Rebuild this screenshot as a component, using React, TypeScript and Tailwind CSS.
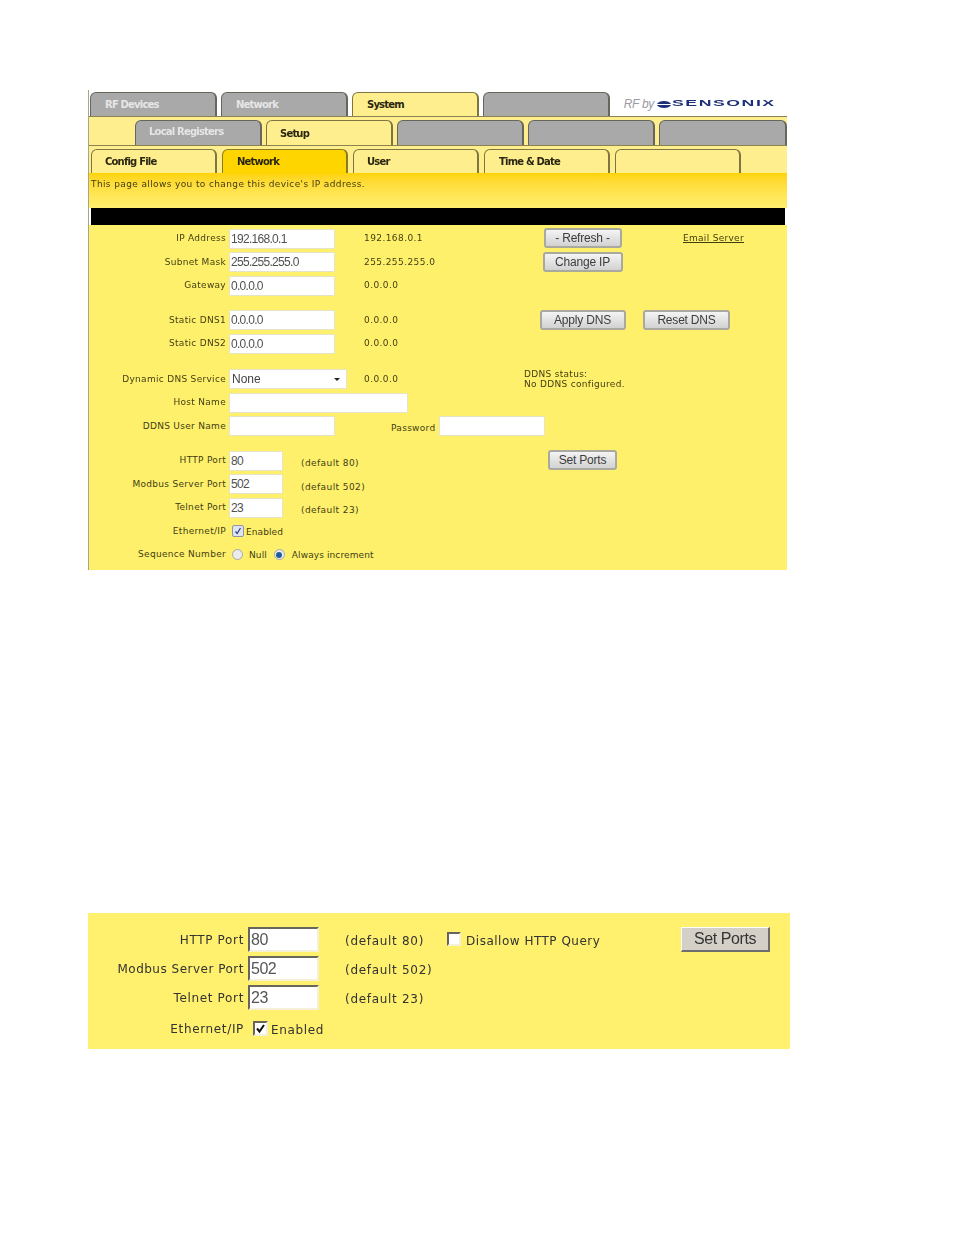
import React from 'react';

const verdana = "font-['DejaVu_Sans',sans-serif]";
const arial = "font-['Liberation_Sans',sans-serif]";
const formRow = 'grid grid-cols-[138px_135px_158px_121px_1fr] items-center h-[23.5px] pl-[2px]';
const labelText = `${verdana} text-[9px] tracking-[0.3px] text-[#423e12] whitespace-nowrap`;
const valueText = `${verdana} text-[9px] tracking-[0.42px] text-[#423e12] whitespace-nowrap`;
const introText = `${verdana} text-[9px] tracking-[0.38px] text-[#423e12] whitespace-nowrap`;
const tightText = `${verdana} text-[9px] tracking-[0.1px] text-[#423e12] whitespace-nowrap`;

type TabKind = 'grey' | 'pale' | 'gold';

const tabColors: Record<TabKind, string> = {
  grey: 'bg-[#a9a9a9] text-[#e6e6e6] border-[#66665c]',
  pale: 'bg-[#ffee8e] text-[#2a2710] border-[#7d7640]',
  gold: 'bg-[#ffd500] text-[#2a2710] border-[#8a7a20]',
};

const Tab = ({ kind, width, label, lift = 0, indent = 14 }: { kind: TabKind; width: number; label?: string; lift?: number; indent?: number }) => (
  <div
    className={`h-full shrink-0 flex items-center rounded-t-[6px] border-t border-l border-r-2 ${tabColors[kind]} ${verdana} text-[10px] font-bold tracking-[-0.8px] whitespace-nowrap`}
    style={{ width, paddingBottom: lift, paddingLeft: indent }}
  >
    {label}
  </div>
);

const Label = ({ children }: { children: React.ReactNode }) => (
  <div className={`${labelText} text-right pr-[3px]`}>{children}</div>
);

const Field = ({ value = '', width = 106 }: { value?: string; width?: number }) => (
  <input
    readOnly
    value={value}
    className={`block h-[20px] bg-white border border-[#e6e4c8] rounded-[1px] px-[1px] ${arial} text-[12px] tracking-[-0.7px] text-[#505050]`}
    style={{ width }}
  />
);

const Btn = ({ children, width }: { children: React.ReactNode; width: number }) => (
  <div
    className={`h-[20px] -mt-[1px] mx-auto flex items-center justify-center rounded-[3px] border-2 border-[#a9a9a0] bg-gradient-to-b from-[#f4f4f4] to-[#d2d2d2] ${arial} text-[12px] tracking-[-0.2px] text-[#3c3c3c]`}
    style={{ width }}
  >
    {children}
  </div>
);

const Value = ({ children }: { children: React.ReactNode }) => <div className={valueText}>{children}</div>;

const Radio = ({ on }: { on?: boolean }) => (
  <span className="w-[11px] h-[11px] shrink-0 rounded-full border border-[#a8a8a8] bg-[#ececec] flex items-center justify-center">
    {on && <span className="w-[6px] h-[6px] rounded-full bg-[#1f5f96]" />}
  </span>
);

const SensonixLogo = () => (
  <div className="flex items-center mr-[12px]">
    <span className={`${arial} italic text-[12px] tracking-[-0.3px] text-[#9a9aa2]`}>RF by</span>
    <svg className="ml-[3px]" width="14" height="7" viewBox="0 0 14 7">
      <ellipse cx="7" cy="3.5" rx="7" ry="3.5" fill="#1c2f78" />
      <rect x="0" y="3" width="14" height="1" fill="#fff" />
    </svg>
    <span className="w-[103px] ml-[1px]">
      <span className={`block ${arial} font-bold text-[9px] tracking-[0.8px] text-[#1c2f78] scale-x-[1.96] origin-left whitespace-nowrap`}>SENSONIX</span>
    </span>
  </div>
);

const TopPanel = () => (
  <div className="w-[699px] border-l border-[#a8a68a] blur-[0.35px]">
    {/* Top tabs */}
    <div className="h-[27px] flex pt-[2px] pl-[1px] gap-[4px] border-b border-[#8a8350] bg-white">
      <Tab kind="grey" width={127} label="RF Devices" />
      <Tab kind="grey" width={127} label="Network" />
      <Tab kind="pale" width={127} label="System" />
      <Tab kind="grey" width={127} />
      <div className="flex-1 flex items-center justify-end">
        <SensonixLogo />
      </div>
    </div>
    {/* Second tabs */}
    <div className="h-[28px] pt-[3px] pl-[46px] flex gap-[4px] bg-[#ffee8e]">
      <Tab kind="grey" width={127} label="Local Registers" lift={4} indent={13} />
      <Tab kind="pale" width={127} label="Setup" indent={13} />
      <Tab kind="grey" width={127} />
      <Tab kind="grey" width={127} />
      <Tab kind="grey" width={128} />
    </div>
    {/* Third tabs */}
    <div className="h-[28px] pt-[3px] pl-[2px] flex gap-[5px] bg-[#ffee8e] border-t border-[#8a8350]">
      <Tab kind="pale" width={126} label="Config File" indent={13} />
      <Tab kind="gold" width={126} label="Network" />
      <Tab kind="pale" width={126} label="User" indent={13} />
      <Tab kind="pale" width={126} label="Time & Date" />
      <Tab kind="pale" width={126} />
    </div>
    <div className={`h-[35px] pl-[2px] pt-[5px] bg-gradient-to-b from-[#ffd400] to-[#fff06e] ${introText}`}>
      This page allows you to change this device's IP address.
    </div>
    <div className="h-[17px] ml-[2px] mr-[2px] bg-black" />

    {/* Form */}
    <div className="bg-[#fff06c] pt-[2px] h-[345px]">
      <div className={formRow}>
        <Label>IP Address</Label>
        <Field value="192.168.0.1" />
        <Value>192.168.0.1</Value>
        <Btn width={78}>- Refresh -</Btn>
        <a className={`${labelText} underline pl-[40px]`}>Email Server</a>
      </div>
      <div className={formRow}>
        <Label>Subnet Mask</Label>
        <Field value="255.255.255.0" />
        <Value>255.255.255.0</Value>
        <Btn width={80}>Change IP</Btn>
      </div>
      <div className={formRow}>
        <Label>Gateway</Label>
        <Field value="0.0.0.0" />
        <Value>0.0.0.0</Value>
      </div>

      <div className={`${formRow} mt-[11px]`}>
        <Label>Static DNS1</Label>
        <Field value="0.0.0.0" />
        <Value>0.0.0.0</Value>
        <Btn width={86}>Apply DNS</Btn>
        <div className="w-[87px]">
          <Btn width={87}>Reset DNS</Btn>
        </div>
      </div>
      <div className={formRow}>
        <Label>Static DNS2</Label>
        <Field value="0.0.0.0" />
        <Value>0.0.0.0</Value>
      </div>

      <div className={`${formRow} mt-[12px]`}>
        <Label>Dynamic DNS Service</Label>
        <div className={`w-[118px] h-[20px] bg-white border border-[#e6e4c8] rounded-[1px] pl-[2px] pr-[6px] flex items-center justify-between ${arial} text-[12px] text-[#444]`}>
          None
          <span className="w-0 h-0 border-x-[3px] border-x-transparent border-t-[3px] border-t-[#222]" />
        </div>
        <Value>0.0.0.0</Value>
        <div className={`${labelText} leading-[10px] pl-[2px]`}>
          DDNS status:
          <br />
          No DDNS configured.
        </div>
      </div>
      <div className={formRow}>
        <Label>Host Name</Label>
        <Field width={179} />
      </div>
      <div className={formRow}>
        <Label>DDNS User Name</Label>
        <Field />
        <div className="col-span-2 flex items-center pl-[27px]">
          <span className={`${labelText} pt-[4px] pr-[4px]`}>Password</span>
          <Field />
        </div>
      </div>

      <div className={`${formRow} mt-[11px]`}>
        <Label>HTTP Port</Label>
        <div className="flex items-center">
          <Field value="80" width={54} />
          <span className={`${valueText} ml-[18px] pt-[6px]`}>(default 80)</span>
        </div>
        <div />
        <Btn width={69}>Set Ports</Btn>
      </div>
      <div className={formRow}>
        <Label>Modbus Server Port</Label>
        <div className="flex items-center">
          <Field value="502" width={54} />
          <span className={`${valueText} ml-[18px] pt-[6px]`}>(default 502)</span>
        </div>
      </div>
      <div className={formRow}>
        <Label>Telnet Port</Label>
        <div className="flex items-center">
          <Field value="23" width={54} />
          <span className={`${valueText} ml-[18px] pt-[6px]`}>(default 23)</span>
        </div>
      </div>
      <div className={formRow}>
        <Label>Ethernet/IP</Label>
        <div className="flex items-center pl-[3px]">
          <span className="w-[12px] h-[12px] shrink-0 rounded-[2px] border border-[#8f96a8] bg-[#dfe3ee] flex items-center justify-center">
            <svg width="8" height="8" viewBox="0 0 8 8">
              <path d="M1.5 4.5 L3.2 6.5 L6.5 1" fill="none" stroke="#2a3f8f" strokeWidth="1.2" />
            </svg>
          </span>
          <span className={`${tightText} ml-[2px] pt-[3px]`}>Enabled</span>
        </div>
      </div>
      <div className={formRow}>
        <Label>Sequence Number</Label>
        <div className="flex items-center pl-[3px]">
          <Radio />
          <span className={`${tightText} ml-[6px] pt-[2px]`}>Null</span>
          <span className="ml-[7px]">
            <Radio on />
          </span>
          <span className={`${tightText} ml-[7px] pt-[2px]`}>Always increment</span>
        </div>
      </div>
    </div>
  </div>
);

const PortField = ({ value }: { value: string }) => (
  <input
    readOnly
    value={value}
    className={`block w-[71px] h-[25px] bg-white border-2 border-t-[#66665c] border-l-[#66665c] border-b-[#f4f1d8] border-r-[#f4f1d8] pl-[1px] ${arial} text-[16px] tracking-[-0.5px] text-[#555]`}
  />
);

const bottomRow = 'flex items-center h-[29px]';
const bottomLabel = `${verdana} text-[12px] tracking-[0.65px] text-[#333] whitespace-nowrap`;
const bottomNote = `${verdana} text-[12px] tracking-[0.5px] text-[#333] whitespace-nowrap`;
const bottomDefault = `${verdana} text-[12px] tracking-[0.7px] text-[#333] whitespace-nowrap`;

const BottomPanel = () => (
  <div className="w-[702px] h-[136px] mt-[343px] bg-[#fff06e] pt-[12px] blur-[0.3px] flex">
    <div className="w-[160px] shrink-0">
      {['HTTP Port', 'Modbus Server Port', 'Telnet Port'].map((text) => (
        <div key={text} className={`${bottomRow} justify-end pr-[4px] ${text === 'Modbus Server Port' ? bottomNote : bottomLabel}`}>
          {text}
        </div>
      ))}
      <div className={`${bottomRow} mt-[2px] justify-end pr-[4px] ${bottomLabel}`}>Ethernet/IP</div>
    </div>
    <div className="flex-1">
      <div className={bottomRow}>
        <PortField value="80" />
        <span className={`${bottomDefault} ml-[26px] pt-[2px]`}>(default 80)</span>
        <span className="ml-[23px] w-[14px] h-[14px] shrink-0 border-2 border-t-[#66665c] border-l-[#66665c] border-b-[#f4f1d8] border-r-[#f4f1d8] bg-white -mt-[2px]" />
        <span className={`${bottomNote} ml-[5px] pt-[2px]`}>Disallow HTTP Query</span>
        <div className={`ml-auto mr-[20px] w-[89px] h-[25px] flex items-center justify-center bg-[#d4d0c8] border-t border-l border-white border-r-2 border-b-2 border-r-[#6e6e6e] border-b-[#6e6e6e] ${arial} text-[16px] tracking-[-0.4px] text-[#333]`}>
          Set Ports
        </div>
      </div>
      <div className={bottomRow}>
        <PortField value="502" />
        <span className={`${bottomDefault} ml-[26px] pt-[2px]`}>(default 502)</span>
      </div>
      <div className={bottomRow}>
        <PortField value="23" />
        <span className={`${bottomDefault} ml-[26px] pt-[2px]`}>(default 23)</span>
      </div>
      <div className={`${bottomRow} mt-[2px] pl-[5px]`}>
        <span className="w-[15px] h-[15px] shrink-0 border-2 border-t-[#66665c] border-l-[#66665c] border-b-[#f4f1d8] border-r-[#f4f1d8] bg-white flex items-center justify-center">
          <svg width="11" height="11" viewBox="0 0 11 11">
            <path d="M2 5.5 L4.5 8.5 L9 2" fill="none" stroke="#111" strokeWidth="2" />
          </svg>
        </span>
        <span className={`${bottomLabel} ml-[3px] pt-[3px]`}>Enabled</span>
      </div>
    </div>
  </div>
);

export default function App() {
  return (
    <div className="min-h-[1235px] bg-white pt-[90px] pl-[88px]">
      <TopPanel />
      <BottomPanel />
    </div>
  );
}
